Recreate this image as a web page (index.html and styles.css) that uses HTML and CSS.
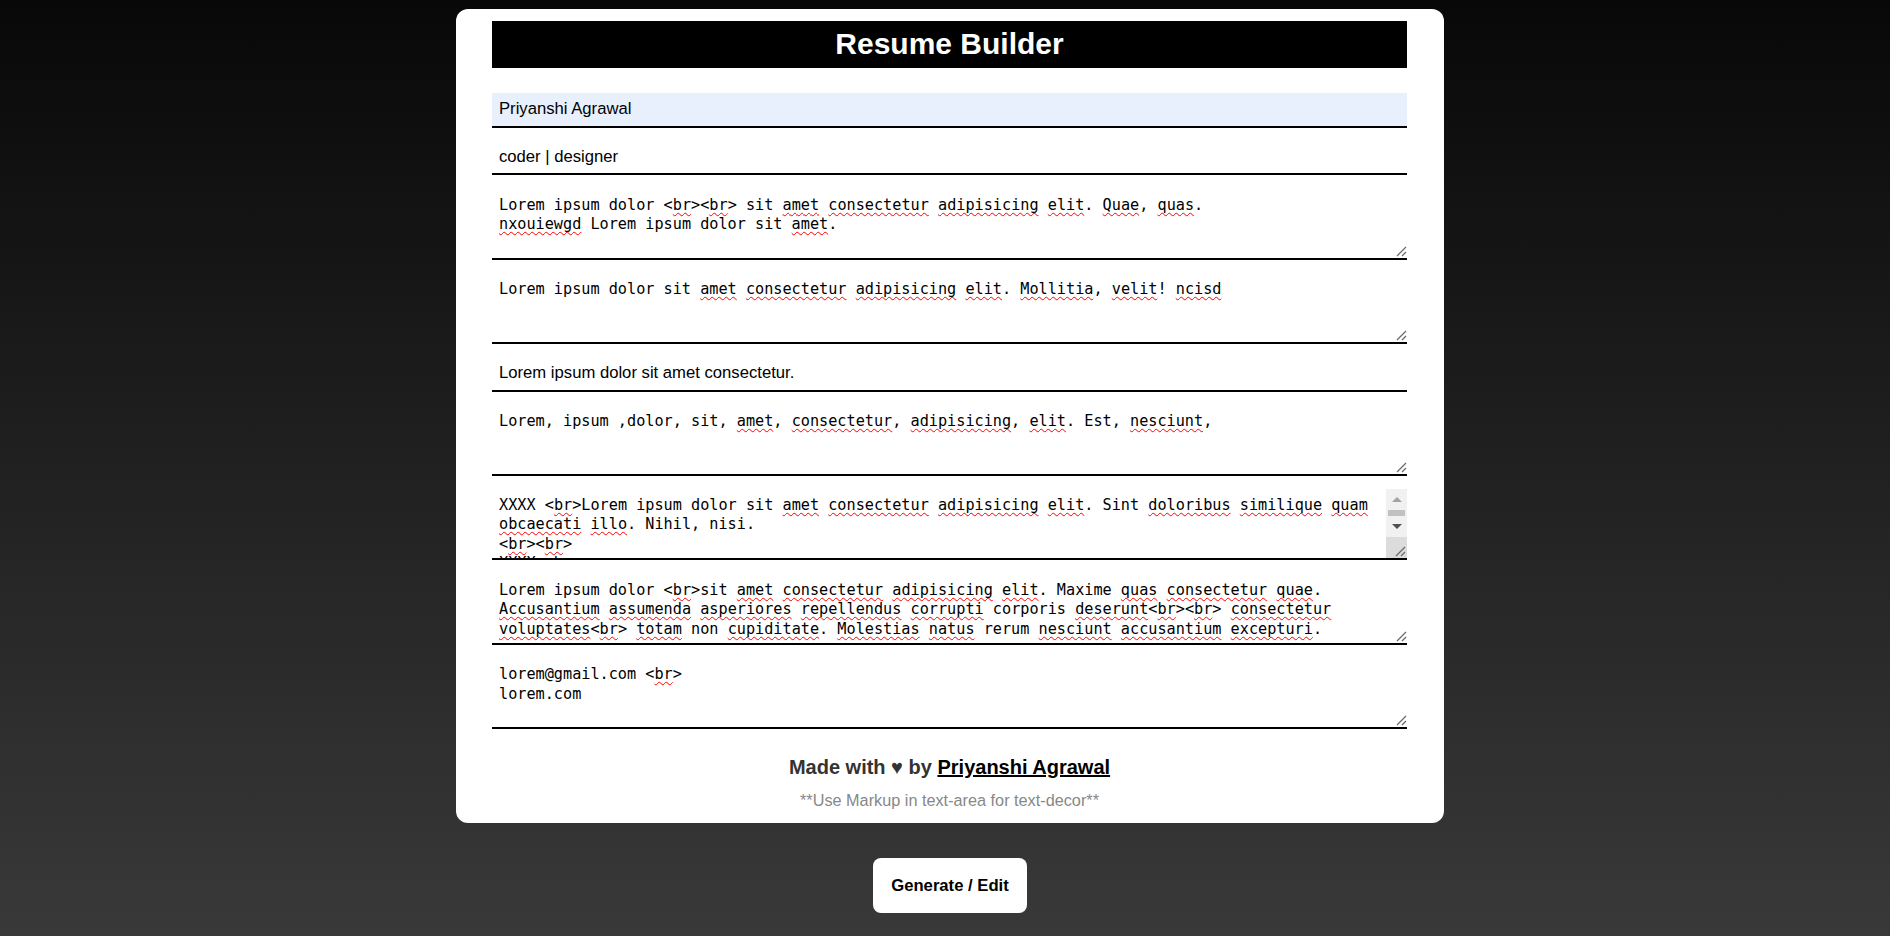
FILE: index.html
```html
<!DOCTYPE html>
<html lang="en">
<head>
<meta charset="utf-8">
<title>Resume Builder</title>
<link rel="stylesheet" href="styles.css">
</head>
<body>
<div class="page">
  <main class="card">
    <h1 class="title">Resume Builder</h1>

    <input class="field autofill" type="text" value="Priyanshi Agrawal">
    <input class="field" type="text" value="coder | designer">

    <div class="area" role="textbox" aria-multiline="true">
      <div class="text">Lorem ipsum dolor &lt;<span class="m">br</span>&gt;&lt;<span class="m">br</span>&gt; sit <span class="m">amet</span> <span class="m">consectetur</span> <span class="m">adipisicing</span> <span class="m">elit</span>. <span class="m">Quae</span>, <span class="m">quas</span>.<br><span class="m">nxouiewgd</span> Lorem ipsum dolor sit <span class="m">amet</span>.</div>
      <svg class="grip" width="12" height="12" viewBox="0 0 12 12"><path d="M11 2L2 11M11 7L7 11"/></svg>
    </div>

    <div class="area" role="textbox" aria-multiline="true">
      <div class="text">Lorem ipsum dolor sit <span class="m">amet</span> <span class="m">consectetur</span> <span class="m">adipisicing</span> <span class="m">elit</span>. <span class="m">Mollitia</span>, <span class="m">velit</span>! <span class="m">ncisd</span></div>
      <svg class="grip" width="12" height="12" viewBox="0 0 12 12"><path d="M11 2L2 11M11 7L7 11"/></svg>
    </div>

    <input class="field" type="text" value="Lorem ipsum dolor sit amet consectetur.">

    <div class="area" role="textbox" aria-multiline="true">
      <div class="text">Lorem, ipsum ,dolor, sit, <span class="m">amet</span>, <span class="m">consectetur</span>, <span class="m">adipisicing</span>, <span class="m">elit</span>. Est, <span class="m">nesciunt</span>,</div>
      <svg class="grip" width="12" height="12" viewBox="0 0 12 12"><path d="M11 2L2 11M11 7L7 11"/></svg>
    </div>

    <div class="area scrolling" role="textbox" aria-multiline="true">
      <div class="text">XXXX &lt;<span class="m">br</span>&gt;Lorem ipsum dolor sit <span class="m">amet</span> <span class="m">consectetur</span> <span class="m">adipisicing</span> <span class="m">elit</span>. Sint <span class="m">doloribus</span> <span class="m">similique</span> <span class="m">quam</span><br><span class="m">obcaecati</span> <span class="m">illo</span>. Nihil, nisi.<br>&lt;<span class="m">br</span>&gt;&lt;<span class="m">br</span>&gt;<br>XXXX &lt;br&gt;</div>
      <div class="vbar" aria-hidden="true">
        <div class="sb-btn"><span class="arrow up"></span></div>
        <div class="sb-track"><div class="sb-thumb"></div></div>
        <div class="sb-btn"><span class="arrow down"></span></div>
        <div class="sb-corner"><svg class="grip-in" width="12" height="12" viewBox="0 0 12 12"><path d="M11 2L2 11M11 7L7 11"/></svg></div>
      </div>
    </div>

    <div class="area" role="textbox" aria-multiline="true">
      <div class="text">Lorem ipsum dolor &lt;<span class="m">br</span>&gt;sit <span class="m">amet</span> <span class="m">consectetur</span> <span class="m">adipisicing</span> <span class="m">elit</span>. Maxime <span class="m">quas</span> <span class="m">consectetur</span> <span class="m">quae</span>.<br><span class="m">Accusantium</span> <span class="m">assumenda</span> <span class="m">asperiores</span> <span class="m">repellendus</span> <span class="m">corrupti</span> corporis <span class="m">deserunt</span>&lt;<span class="m">br</span>&gt;&lt;<span class="m">br</span>&gt; <span class="m">consectetur</span><br><span class="m">voluptates</span>&lt;<span class="m">br</span>&gt; <span class="m">totam</span> non <span class="m">cupiditate</span>. <span class="m">Molestias</span> <span class="m">natus</span> rerum <span class="m">nesciunt</span> <span class="m">accusantium</span> <span class="m">excepturi</span>.</div>
      <svg class="grip" width="12" height="12" viewBox="0 0 12 12"><path d="M11 2L2 11M11 7L7 11"/></svg>
    </div>

    <div class="area" role="textbox" aria-multiline="true">
      <div class="text">lorem@gmail.com &lt;<span class="m">br</span>&gt;<br>lorem.com</div>
      <svg class="grip" width="12" height="12" viewBox="0 0 12 12"><path d="M11 2L2 11M11 7L7 11"/></svg>
    </div>

    <footer class="credits">
      <h3 class="made">Made with &#9829; by <a class="author" href="#">Priyanshi Agrawal</a></h3>
      <p class="hint">**Use Markup in text-area for text-decor**</p>
    </footer>
  </main>

  <button class="generate" type="button">Generate / Edit</button>
</div>
</body>
</html>
```

FILE: styles.css
```css
* {
  box-sizing: border-box;
}

html,
body {
  margin: 0;
}

body {
  min-height: 936px;
  background: linear-gradient(#080808, #393939);
  font-family: "Liberation Sans", Arial, sans-serif;
}

.page {
  display: flex;
  flex-direction: column;
  align-items: center;
  padding: 9px 0 0 10px;
}

.card {
  width: 988px;
  background: #fff;
  border-radius: 12px;
  padding: 12px 37px 13.5px 36px;
}

.title {
  margin: 0 0 25px;
  padding: 6px 0;
  background: #000;
  color: #fff;
  font-size: 30px;
  line-height: 34.7px;
  font-weight: bold;
  text-align: center;
}

.field {
  display: block;
  width: 100%;
  height: 35px;
  margin: 12.6px 0 0;
  padding: 0 7px;
  border: 0;
  border-bottom: 2px solid #000;
  border-radius: 0;
  outline: none;
  background: #fff;
  color: #000;
  font-family: "Liberation Sans", Arial, sans-serif;
  font-size: 16.67px;
}

.title + .field {
  margin-top: 0;
}

.autofill {
  background: #e8f0fe;
}

.area {
  position: relative;
  height: 71.8px;
  margin-top: 12.6px;
  padding: 8px 7px 0;
  border-bottom: 2px solid #000;
  overflow: hidden;
  color: #000;
  font-family: "DejaVu Sans Mono", "Liberation Mono", monospace;
  font-size: 15.2px;
  line-height: 19.3px;
}

.text {
  white-space: nowrap;
}

.m {
  text-decoration: underline wavy #f00;
  text-decoration-thickness: 1px;
  text-underline-offset: 2px;
  text-decoration-skip-ink: none;
}

.grip {
  position: absolute;
  right: 0;
  bottom: 1px;
}

.grip path,
.grip-in path {
  fill: none;
  stroke: #6b6b6b;
  stroke-width: 1.3;
}

.scrolling {
  padding-top: 7.5px;
  padding-right: 28px;
}

.vbar {
  position: absolute;
  top: 0;
  right: 0;
  bottom: 0;
  width: 21px;
  display: flex;
  flex-direction: column;
  background: #f1f1f1;
}

.sb-btn {
  height: 21px;
  display: flex;
  align-items: center;
  justify-content: center;
}

.arrow {
  width: 0;
  height: 0;
  border-left: 5px solid transparent;
  border-right: 5px solid transparent;
}

.arrow.up {
  border-bottom: 5px solid #a3a3a3;
}

.arrow.down {
  border-top: 5px solid #505050;
}

.sb-track {
  flex: 1;
  display: flex;
  padding: 0 2px;
}

.sb-thumb {
  flex: 1;
  background: #c1c1c1;
}

.sb-corner {
  position: relative;
  height: 21px;
  background: #dcdcdc;
}

.grip-in {
  position: absolute;
  right: 1px;
  bottom: 1px;
}

.credits {
  margin-top: 26.5px;
  text-align: center;
}

.made {
  margin: 0;
  color: #333;
  font-size: 20px;
  line-height: 23px;
  font-weight: bold;
}

.author {
  color: #000;
  text-decoration: underline;
}

.hint {
  margin: 11.8px 0 0;
  color: #888;
  font-size: 16.25px;
  line-height: 18.7px;
}

.generate {
  margin-top: 35px;
  padding: 18px 18.5px;
  border: 0;
  border-radius: 8px;
  background: #fff;
  color: #000;
  font-family: "Liberation Sans", Arial, sans-serif;
  font-size: 16.67px;
  line-height: 19.5px;
  font-weight: bold;
  cursor: pointer;
}
```
